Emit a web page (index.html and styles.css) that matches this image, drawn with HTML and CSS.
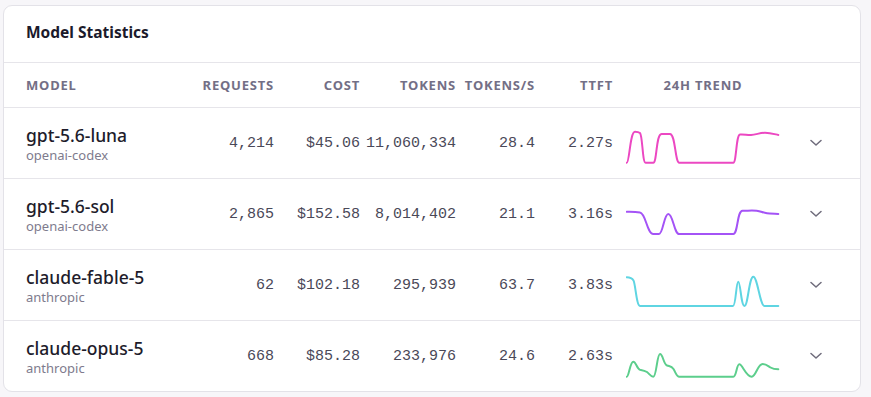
FILE: index.html
```html
<!DOCTYPE html>
<html lang="en">
<head>
<meta charset="utf-8">
<title>Model Statistics</title>
<link rel="stylesheet" href="styles.css">
</head>
<body>
<section class="card">
  <h2 class="card-title">Model Statistics</h2>
  <div class="grid head">
    <div class="th left">Model</div>
    <div class="th">Requests</div>
    <div class="th">Cost</div>
    <div class="th">Tokens</div>
    <div class="th">Tokens/s</div>
    <div class="th">TTFT</div>
    <div class="th center">24h Trend</div>
    <div></div>
  </div>

  <div class="grid row">
    <div class="model"><div class="name">gpt-5.6-luna</div><div class="provider">openai-codex</div></div>
    <div class="num">4,214</div>
    <div class="num">$45.06</div>
    <div class="num">11,060,334</div>
    <div class="num">28.4</div>
    <div class="num">2.27s</div>
    <div class="trend">
      <svg width="154" height="48" viewBox="0 0 154 48"><path class="spark pink" d="M0.7 43.7 C3.5 43.7 4 12.7 9 12.7 C10.5 12.7 12.5 12.8 14 14 C16.5 16.5 16.5 43.7 19.5 43.7 L27.3 43.7 C31 43.7 30 15 35.5 15 L44 15 C49.5 15 49 43.7 53.3 43.7 L107.3 43.7 C110.5 43.7 110 16 114 15.5 C118 15 121 16.2 125 16 C130 15.7 134 13.7 139 13.7 C144 13.7 148 15 152.3 16"/></svg>
    </div>
    <div class="chev"><svg width="12" height="8" viewBox="0 0 12 8"><path d="M1 1.5 L6 6 L11 1.5"/></svg></div>
  </div>

  <div class="grid row">
    <div class="model"><div class="name">gpt-5.6-sol</div><div class="provider">openai-codex</div></div>
    <div class="num">2,865</div>
    <div class="num">$152.58</div>
    <div class="num">8,014,402</div>
    <div class="num">21.1</div>
    <div class="num">3.16s</div>
    <div class="trend">
      <svg width="154" height="48" viewBox="0 0 154 48"><path class="spark purple" d="M0.7 21.7 C5 21.7 9 21.5 14 22.5 C20 23.5 21 44 27.3 44 L33 44 C37 44 38 24 42.3 24 C47 24 48 44 53.3 44 L107.3 44 C112 44 111 20.7 116.5 20.7 C122 20.7 126 20.5 130.7 20.7 C135 21 137 23 141 23.3 C145 23.6 149 24 152.3 24"/></svg>
    </div>
    <div class="chev"><svg width="12" height="8" viewBox="0 0 12 8"><path d="M1 1.5 L6 6 L11 1.5"/></svg></div>
  </div>

  <div class="grid row">
    <div class="model"><div class="name">claude-fable-5</div><div class="provider">anthropic</div></div>
    <div class="num">62</div>
    <div class="num">$102.18</div>
    <div class="num">295,939</div>
    <div class="num">63.7</div>
    <div class="num">3.83s</div>
    <div class="trend">
      <svg width="154" height="48" viewBox="0 0 154 48"><path class="spark cyan" d="M0.7 16.3 C4 16.3 6 17 7.5 19.5 C9.5 23 10.5 45 14 45 L107 45 C110 45 110 20.7 112.3 20.7 C114.5 20.7 115 45 118.5 45 C122 45 123 15.7 127.3 15.7 C131.5 15.7 134 45 138.5 45 L152.3 45"/></svg>
    </div>
    <div class="chev"><svg width="12" height="8" viewBox="0 0 12 8"><path d="M1 1.5 L6 6 L11 1.5"/></svg></div>
  </div>

  <div class="grid row last">
    <div class="model"><div class="name">claude-opus-5</div><div class="provider">anthropic</div></div>
    <div class="num">668</div>
    <div class="num">$85.28</div>
    <div class="num">233,976</div>
    <div class="num">24.6</div>
    <div class="num">2.63s</div>
    <div class="trend">
      <svg width="154" height="48" viewBox="0 0 154 48"><path class="spark green" d="M0.7 44.7 C3 44.7 4 29.7 7.3 29.7 C10 29.7 11 37 14 37.7 C17 38.3 19 38.7 21 40 C23.5 42 25 44.7 27.3 44.7 C30.5 44.7 31 22 34 22 C37 22 37.5 32.5 41 33.5 C44 34.5 45.5 34 47.5 37 C50 41 50.5 44.7 53.3 44.7 L107.3 44.7 C110.5 44.7 110.5 32.3 113.3 32.3 C116.5 32.3 120 44.7 125.7 44.7 C130 44.7 131.5 32 136.7 32 C140.5 32 142 34 144.5 35.5 C147 37 149 37.3 152.3 37.3"/></svg>
    </div>
    <div class="chev"><svg width="12" height="8" viewBox="0 0 12 8"><path d="M1 1.5 L6 6 L11 1.5"/></svg></div>
  </div>
</section>
</body>
</html>
```

FILE: styles.css
```css
* { box-sizing: border-box; }

html, body {
  margin: 0;
  background: #f7f6f9;
}

body {
  padding: 5px 10px 5px 3px;
  font-family: "Noto Sans", "DejaVu Sans", sans-serif;
  color: #1d1b2a;
}

.card {
  background: #ffffff;
  border: 1px solid #e3e2e8;
  border-radius: 9px;
  overflow: hidden;
}

.card-title {
  margin: 0;
  height: 57px;
  padding: 16px 22px 0;
  font-size: 15.5px;
  line-height: 21px;
  font-weight: 700;
  color: #1b1a2b;
  border-bottom: 1px solid #e6e5ea;
}

.grid {
  display: grid;
  grid-template-columns: 164px 84px 86px 96px 79px 78px 180px 1fr;
  align-items: center;
  padding: 0 22px;
}

.head {
  height: 45px;
  border-bottom: 1px solid #e6e5ea;
}

.th {
  font-size: 13px;
  font-weight: 700;
  letter-spacing: 0.8px;
  text-transform: uppercase;
  color: #736f86;
  text-align: right;
  white-space: nowrap;
}

.th.left { text-align: left; }
.th.center { text-align: center; }

.row {
  height: 71px;
  border-bottom: 1px solid #e6e5ea;
}

.row.last { border-bottom: none; height: 70px; }

.model {
  display: flex;
  flex-direction: column;
  gap: 1px;
  padding-top: 2px;
}

.name {
  font-size: 17.5px;
  font-weight: 500;
  line-height: 21px;
  color: #1e1c2b;
  white-space: nowrap;
}

.provider {
  font-size: 13px;
  line-height: 17px;
  color: #7e7b8d;
}

.num {
  font-family: "Liberation Mono", "DejaVu Sans Mono", monospace;
  font-size: 15px;
  color: #4a4858;
  text-align: right;
  white-space: nowrap;
}

.trend {
  display: flex;
  justify-content: center;
}

.trend svg { display: block; }

.spark {
  fill: none;
  stroke-width: 2;
  stroke-linecap: round;
  stroke-linejoin: round;
}

.pink { stroke: #ec48c2; }
.purple { stroke: #a453f6; }
.cyan { stroke: #5fd5e2; }
.green { stroke: #5cce8c; }

.chev {
  display: flex;
  justify-content: center;
}

.chev svg { display: block; }

.chev path {
  fill: none;
  stroke: #6f6c7c;
  stroke-width: 1.5;
  stroke-linecap: round;
  stroke-linejoin: round;
}
```
